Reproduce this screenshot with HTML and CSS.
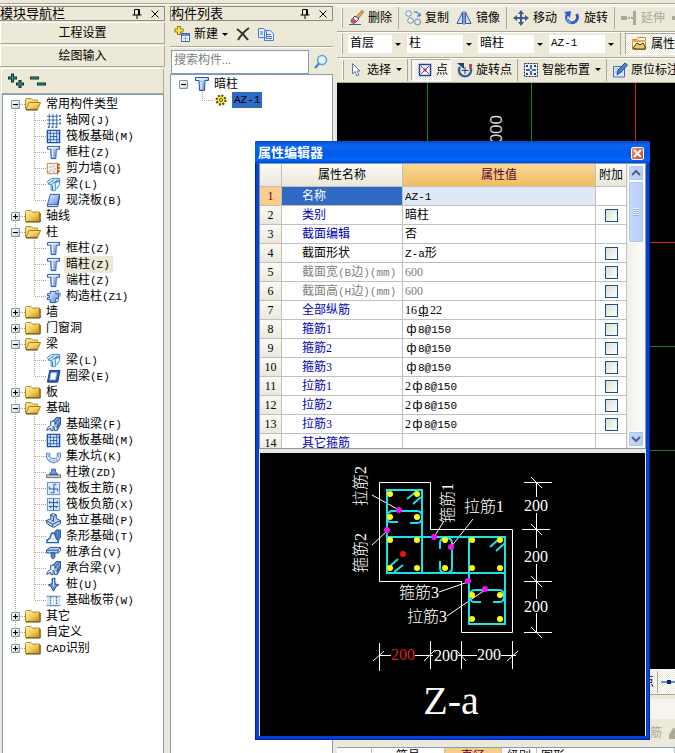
FILE: index.html
```html
<!DOCTYPE html>
<html lang="zh-CN">
<head>
<meta charset="utf-8">
<title>属性编辑器</title>
<link rel="stylesheet" href="styles.css">
</head>
<body>
<svg class="defs" aria-hidden="true">
  <defs>
    <linearGradient id="gold" x1="0" y1="0" x2="1" y2="1"><stop offset="0" stop-color="#fff0b0"/><stop offset=".5" stop-color="#f6cf60"/><stop offset="1" stop-color="#c08a10"/></linearGradient>
    <linearGradient id="blue" x1="0" y1="0" x2="1" y2="1"><stop offset="0" stop-color="#e8f2ff"/><stop offset="1" stop-color="#5c8ce0"/></linearGradient>
    <symbol id="folder" viewBox="0 0 16 16"><path d="M.5 13.500V3.500L1.500 2.500H6L7.500 4H14.500V13.500Z" fill="url(#gold)" stroke="#b58a28"/><path d="M1 14H15.200V5" fill="none" stroke="#5a4718"/></symbol>
    <symbol id="folder-open" viewBox="0 0 16 16"><path d="M.5 13V3.500L1.500 2.500H6L7.500 4H12.500V7" fill="#f7dc88" stroke="#b58a28"/><path d="M1 13.500L4 6.500H15.500L12.500 13.500Z" fill="url(#gold)" stroke="#b08018"/><path d="M1 14H12.500" stroke="#5a4718"/></symbol>
    <symbol id="axis" viewBox="0 0 16 16"><path d="M3.500 1V14M7.500 1V14M11.500 1V14M1 3.500H13M1 7.500H13M1 11.500H13" stroke="#3465b4" fill="none"/><path d="M14 2h2v2h-2zM14 6h2v2h-2zM14 10h2v2h-2zM2 14h2v2h-2zM6 14h2v2h-2zM10 14h2v2h-2z" fill="#3465b4"/></symbol>
    <symbol id="raft" viewBox="0 0 16 16"><path d="M1.500 1.500H14.500V14.500H1.500Z" fill="#dceaff" stroke="#1d4fa8" stroke-width="1.500"/><path d="M4.500 2V14M11.500 2V14M2 4.500H14M2 11.500H14M8 4V12M4 8H12" stroke="#2c62b8" fill="none"/></symbol>
    <symbol id="column" viewBox="0 0 16 16"><path d="M1.500 1.500H14.500V4.500H11L10.500 14.500H5.500L5 4.500H1.500Z" fill="url(#blue)" stroke="#2450b0"/><path d="M3 3H13M7 6V13" stroke="#fff"/></symbol>
    <symbol id="shearwall" viewBox="0 0 16 16"><path d="M1.500 2.500H12.500V13.500H1.500Z" fill="#f7eee8" stroke="#c8804c"/><path d="M12.500 2.500V14M12 4H15M12 7.500H15M12 11H15" stroke="#c05a20" stroke-width="1.500"/><path d="M4 6h1v1H4zM7 5h1v1H7zM9 8h1v1H9zM5 9h1v1H5zM8 11h1v1H8zM3 11h1v1H3z" fill="#555"/></symbol>
    <symbol id="beam" viewBox="0 0 16 16"><path d="M1.500 4.500L6 1.500H14.500V4L10 6.500V14.500H5.500V8L3 8Z" fill="#d8efff" stroke="#3a8cd0"/><path d="M3 7L9 2.500M6 8L13 2.500M7 9V14M10 6L14.500 3.500V8L11 13" stroke="#2a70c0" fill="none"/></symbol>
    <symbol id="slab" viewBox="0 0 16 16"><path d="M4.500 1.500H14.500L12.500 12.500H1.500Z" fill="url(#blue)" stroke="#2450b0"/><path d="M1.500 12.500V14.500H12.500L14.500 3" fill="none" stroke="#1d3f90"/></symbol>
    <symbol id="tie" viewBox="0 0 16 16"><path d="M4.500 2.500H10.500V5H13.500V10H10.500V14.500H4.500V11.500H1.500V9H3.500V7H1.500V5H4.500Z" fill="url(#blue)" stroke="#1d4fa8"/><path d="M10.500 2.500L13 1V4M13.500 5L15 4V8M10.500 14.500L13 13V10" fill="none" stroke="#4a6ea8"/></symbol>
    <symbol id="ring" viewBox="0 0 16 16"><path d="M4 1.500H15L12.500 14H1.500Z" fill="#2c58b0" stroke="#173c88"/><path d="M5.500 4H11.500L10 11.500H4Z" fill="#fff" stroke="#9cc0f0"/></symbol>
    <symbol id="fbeam" viewBox="0 0 16 16"><path d="M7 5L11 .5H15.500V8L12 14V8Z" fill="#4c80c8" stroke="#1d5090"/><path d="M1 14.500V12L5 9V4.500H9.500V9L12 11V14.500H9V11L7.500 10V14.500H5V12Z" fill="#e4f0ff" stroke="#1d5090"/><path d="M9 5L13 1M11 8L15 3" stroke="#9cc4f4"/></symbol>
    <symbol id="pit" viewBox="0 0 16 16"><path d="M.5 4.500H4V8L6 10H10L12 8V4.500H15.500V9L13 13L8 15L3 13L.5 9Z" fill="#d0e4fc" stroke="#4c7cc0"/><path d="M2 7h1v1H2zM4 11h1v1H4zM8 12h1v1H8zM11 11h1v1h-1zM13 7h1v1h-1z" fill="#1d4fa8"/></symbol>
    <symbol id="pier" viewBox="0 0 16 16"><path d="M.5 10.500H15.500V13.500H.5Z" fill="#ccc" stroke="#666"/><path d="M3.500 10L6 7V4.500H10V7L12.500 10Z" fill="#6e9ce4" stroke="#2450b0"/></symbol>
    <symbol id="mainbar" viewBox="0 0 16 16"><path d="M1.500 1.500H14.500V14.500H1.500Z" fill="#dceaff" stroke="#5a86cc"/><path d="M11 3.500H8.500V12.500H5M3.500 6V8.500H12.500V11" fill="none" stroke="#1d4fa8"/></symbol>
    <symbol id="negbar" viewBox="0 0 16 16"><path d="M1.500 1.500H14.500V14.500H1.500Z" fill="#dceaff" stroke="#5a86cc"/><path d="M8 2V14M3 6H13M3 10H13M4 4V7M12 4V7M5 10V12M11 10V12" fill="none" stroke="#1d4fa8"/></symbol>
    <symbol id="isolated" viewBox="0 0 16 16"><path d="M.5 8L5 6V1.500L8 .5L11 2V6L15.500 8V11L8 15.500L.5 11Z" fill="#b8d4f8" stroke="#1d4f90"/><path d="M.5 8L7 12L15.500 8M7 12V15M5 2L8 4V9L5 7M8 4L11 2" fill="none" stroke="#1d4f90"/></symbol>
    <symbol id="strip" viewBox="0 0 16 16"><path d="M7 6L11 1H15.500V9L12 14" fill="#4c80c8" stroke="#245090"/><path d="M1 14.500V12L4 10L6 4.500H9L11 10L13 12V14.500Z" fill="#e4f0ff" stroke="#1d5fb0" stroke-width="1.500"/></symbol>
    <symbol id="cap" viewBox="0 0 16 16"><path d="M.5 5.500L4 2.500H15.500L13 5.500V8.500H.5Z" fill="#b4d0f8" stroke="#1d4f90"/><path d="M1 5.500H13M13 8.500L15.500 6V3" fill="none" stroke="#1d4f90"/><path d="M5.500 8.500V13L7.500 15L9.500 13V8.500Z" fill="#5c8cd8" stroke="#1d4f90"/></symbol>
    <symbol id="pile" viewBox="0 0 16 16"><path d="M6.500 1.500H9.500V7L13.500 8.500L10.500 10.500L8 15L5.500 10.500L2.500 8.500L6.500 7Z" fill="#6c94dc" stroke="#1d4080"/><path d="M8 2V10" stroke="#d0e4ff"/></symbol>
    <symbol id="band" viewBox="0 0 16 16"><path d="M.5 3.500H15.500M.5 13.500H15.500" stroke="#3465b4"/><path d="M1 4H4V13H1zM12 4H15V13H12z" fill="#cfe0fa"/><path d="M5 4V13M11 4V13" stroke="#123c78" stroke-dasharray="2 1"/><path d="M8 4V13" stroke="#7aa4e0" stroke-dasharray="1 1"/></symbol>
    <symbol id="pin" viewBox="0 0 10 10"><path d="M2.500 6V.5H7.500V6M.5 6H9.500M5 6V10" stroke="#000" fill="none"/><path d="M6 1h1.500v5H6z"/></symbol>
    <symbol id="close" viewBox="0 0 10 10"><path d="M1.500 1.500L8.500 8.500M8.500 1.500L1.500 8.500" stroke="#000" fill="none"/></symbol>
  </defs>
</svg>

<div class="app">
  <div class="top-edge"></div>

  <aside class="pane nav">
    <header class="pane-head"><h2>模块导航栏</h2>
      <button aria-label="固定"><svg><use href="#pin"/></svg></button>
      <button aria-label="关闭"><svg><use href="#close"/></svg></button>
    </header>
    <button class="section">工程设置</button>
    <button class="section">绘图输入</button>
    <div class="nav-tools">
      <button aria-label="全部展开"><svg width="18" height="18" viewBox="0 0 18 18"><path d="M1 6H10M5.500 1.500V10.500M9 12H17M13 8V16" stroke="#0a302c" stroke-width="3" fill="none"/><path d="M2 6H9M5.500 2.500V9.500M10 12H16M13 9V15" stroke="#35a08c" fill="none"/></svg></button>
      <button aria-label="全部折叠"><svg width="18" height="18" viewBox="0 0 18 18"><path d="M1 6H10M8 12H17" stroke="#0a302c" stroke-width="3"/><path d="M2 6H9M9 12H16" stroke="#35a08c"/></svg></button>
    </div>
    <ul class="tree">
      <li><div class="node"><button class="twist minus" aria-label="折叠"></button><svg><use href="#folder-open"/></svg><span>常用构件类型</span></div>
        <ul>
          <li><svg><use href="#axis"/></svg><span>轴网<b>(J)</b></span></li>
          <li><svg><use href="#raft"/></svg><span>筏板基础<b>(M)</b></span></li>
          <li><svg><use href="#column"/></svg><span>框柱<b>(Z)</b></span></li>
          <li><svg><use href="#shearwall"/></svg><span>剪力墙<b>(Q)</b></span></li>
          <li><svg><use href="#beam"/></svg><span>梁<b>(L)</b></span></li>
          <li><svg><use href="#slab"/></svg><span>现浇板<b>(B)</b></span></li>
        </ul></li>
      <li><div class="node"><button class="twist" aria-label="展开"></button><svg><use href="#folder"/></svg><span>轴线</span></div></li>
      <li><div class="node"><button class="twist minus" aria-label="折叠"></button><svg><use href="#folder-open"/></svg><span>柱</span></div>
        <ul>
          <li><svg><use href="#column"/></svg><span>框柱<b>(Z)</b></span></li>
          <li><svg><use href="#column"/></svg><span class="current">暗柱<b>(Z)</b></span></li>
          <li><svg><use href="#column"/></svg><span>端柱<b>(Z)</b></span></li>
          <li><svg><use href="#tie"/></svg><span>构造柱<b>(Z1)</b></span></li>
        </ul></li>
      <li><div class="node"><button class="twist" aria-label="展开"></button><svg><use href="#folder"/></svg><span>墙</span></div></li>
      <li><div class="node"><button class="twist" aria-label="展开"></button><svg><use href="#folder"/></svg><span>门窗洞</span></div></li>
      <li><div class="node"><button class="twist minus" aria-label="折叠"></button><svg><use href="#folder-open"/></svg><span>梁</span></div>
        <ul>
          <li><svg><use href="#beam"/></svg><span>梁<b>(L)</b></span></li>
          <li><svg><use href="#ring"/></svg><span>圈梁<b>(E)</b></span></li>
        </ul></li>
      <li><div class="node"><button class="twist" aria-label="展开"></button><svg><use href="#folder"/></svg><span>板</span></div></li>
      <li><div class="node"><button class="twist minus" aria-label="折叠"></button><svg><use href="#folder-open"/></svg><span>基础</span></div>
        <ul>
          <li><svg><use href="#fbeam"/></svg><span>基础梁<b>(F)</b></span></li>
          <li><svg><use href="#raft"/></svg><span>筏板基础<b>(M)</b></span></li>
          <li><svg><use href="#pit"/></svg><span>集水坑<b>(K)</b></span></li>
          <li><svg><use href="#pier"/></svg><span>柱墩<b>(ZD)</b></span></li>
          <li><svg><use href="#mainbar"/></svg><span>筏板主筋<b>(R)</b></span></li>
          <li><svg><use href="#negbar"/></svg><span>筏板负筋<b>(X)</b></span></li>
          <li><svg><use href="#isolated"/></svg><span>独立基础<b>(P)</b></span></li>
          <li><svg><use href="#strip"/></svg><span>条形基础<b>(T)</b></span></li>
          <li><svg><use href="#cap"/></svg><span>桩承台<b>(V)</b></span></li>
          <li><svg><use href="#fbeam"/></svg><span>承台梁<b>(V)</b></span></li>
          <li><svg><use href="#pile"/></svg><span>桩<b>(U)</b></span></li>
          <li><svg><use href="#band"/></svg><span>基础板带<b>(W)</b></span></li>
        </ul></li>
      <li><div class="node"><button class="twist" aria-label="展开"></button><svg><use href="#folder"/></svg><span>其它</span></div></li>
      <li><div class="node"><button class="twist" aria-label="展开"></button><svg><use href="#folder"/></svg><span>自定义</span></div></li>
      <li><div class="node"><button class="twist" aria-label="展开"></button><svg><use href="#folder"/></svg><span><b>CAD</b>识别</span></div></li>
    </ul>
  </aside>

  <section class="pane parts">
    <header class="pane-head"><h2>构件列表</h2>
      <button aria-label="固定"><svg><use href="#pin"/></svg></button>
      <button aria-label="关闭"><svg><use href="#close"/></svg></button>
    </header>
    <div class="parts-tools">
      <button><svg width="16" height="16" viewBox="0 0 16 16"><path d="M5 0V9M.5 4.500H9.500" stroke="#9c7c10" stroke-width="4"/><path d="M5 1V8M1.500 4.500H8.500" stroke="#ffe650" stroke-width="2"/><path d="M7.500 7.500H15.500V15.500H7.500Z" fill="#fff" stroke="#3465b4"/><path d="M8 8H15V10H8z" fill="#5c8ce0"/><path d="M9 12.500H14M11.500 10V15" stroke="#8cb0e8"/></svg>新建<i class="arrow"></i></button>
      <button aria-label="删除构件"><svg width="14" height="14" viewBox="0 0 14 14"><path d="M1 2Q7 6 12 13M13 1Q7 5 2 13" stroke="#303030" stroke-width="2" fill="none"/></svg></button>
      <button aria-label="复制构件"><svg width="16" height="14" viewBox="0 0 16 14"><path d="M.5 1.500H6L8.500 4V10.500H.5ZM6.500 3.500H12L15.500 6.500V13.500H6.500Z" fill="#e4f0ff" stroke="#4a7cd0"/><path d="M2 5H5M2 7H5M8 7.500H13M8 9.500H14M8 11.500H14" stroke="#4a7cd0"/></svg></button>
    </div>
    <div class="search">
      <input type="text" placeholder="搜索构件..." aria-label="搜索构件">
      <button aria-label="搜索"><svg width="16" height="16" viewBox="0 0 16 16"><circle cx="9" cy="6" r="4.500" fill="#e0f4ff" stroke="#58a4d8" stroke-width="1.500"/><path d="M6 9.500L2 14" stroke="#4a88c8" stroke-width="2.500"/></svg></button>
    </div>
    <ul class="part-tree">
      <li class="root"><button class="twist minus" aria-label="折叠"></button><svg><use href="#column"/></svg><span>暗柱</span></li>
      <li class="leaf"><svg viewBox="0 0 12 12"><circle cx="6" cy="6" r="4.500" fill="#ffe820" stroke="#4a4410" stroke-width="2" stroke-dasharray="2 1.500"/><circle cx="6" cy="6" r="1.500" fill="#fff" stroke="#4a4410"/></svg><a href="#az1"><b>AZ-1</b></a></li>
    </ul>
  </section>

  <main class="work">
    <div class="bar">
      <i class="grip"></i>
      <button class="tool"><svg viewBox="0 0 16 16"><path d="M1 14.500H13" stroke="#4a5a90"/><path d="M8 7L14 .5L15.500 2L10 9Z" fill="#e8b060" stroke="#a06820"/><path d="M3 10L7 6L11 9L7 13H4Z" fill="#fff" stroke="#30408c"/><path d="M3 10L5 8L9 11L7 13H4Z" fill="#d05070"/></svg>删除</button>
      <i class="sep"></i>
      <button class="tool"><svg viewBox="0 0 16 16"><circle cx="3.500" cy="3.500" r="2.800" fill="#eef4fc" stroke="#7088a8"/><circle cx="5.500" cy="10.500" r="2.800" fill="#eef4fc" stroke="#7088a8"/><circle cx="12.500" cy="12" r="3" fill="#dce8f8" stroke="#7088a8"/><path d="M9 2H12L15 6M15 3V6H12" fill="none" stroke="#2060c0"/></svg>复制</button>
      <button class="tool"><svg viewBox="0 0 16 16"><path d="M6.500 2V13.500H1ZM9.500 2V13.500H15Z" fill="#d0e0f8" stroke="#3458b0"/><path d="M8 1V15" stroke="#3458b0"/></svg>镜像</button>
      <i class="sep"></i>
      <button class="tool"><svg viewBox="0 0 16 16"><path d="M8 2V14M2 8H14" stroke="#405c90" stroke-width="2"/><path d="M8 0L11 4H5ZM8 16L5 12H11ZM0 8L4 5V11ZM16 8L12 11V5Z" fill="#405c90"/></svg>移动</button>
      <button class="tool"><svg viewBox="0 0 16 16"><path d="M3.500 4A5.500 5.500 0 1 0 12.500 4" fill="none" stroke="#2c60c8" stroke-width="3"/><path d="M0 2L7 1L6 8Z" fill="#2c60c8"/><path d="M4 6A4.500 4.500 0 0 0 7 13" fill="none" stroke="#9cc4ff"/></svg>旋转</button>
      <i class="sep"></i>
      <button class="tool" disabled><svg viewBox="0 0 16 16"><path d="M0 6H6V10H0zM12 1H15V15H12z" fill="#aca899"/><path d="M7 8H12" stroke="#aca899" stroke-width="2" stroke-dasharray="2 1"/></svg>延伸</button>
      <button class="tool" disabled aria-label="修剪"><svg viewBox="0 0 16 16"><path d="M0 6H6V10H0zM12 1H15V15H12z" fill="#aca899"/></svg></button>
    </div>
    <div class="bar">
      <i class="grip"></i>
      <label class="combo narrow"><select aria-label="楼层"><option>首层</option></select><i class="arrow"></i></label>
      <label class="combo"><select aria-label="构件类型"><option>柱</option></select><i class="arrow"></i></label>
      <label class="combo"><select aria-label="构件子类"><option>暗柱</option></select><i class="arrow"></i></label>
      <label class="combo latin"><select aria-label="构件名称"><option>AZ-1</option></select><i class="arrow"></i></label>
      <i class="sep"></i>
      <button class="tool pressed"><svg viewBox="0 0 16 16"><path d="M1.500 3.500H6L7 1.500H14.500V13.500H1.500Z" fill="#fff" stroke="#d08828"/><path d="M1 4H15V6H1z" fill="#f0a840"/><path d="M2 12L6 7L9 9L12 7L14 10V13H5Z" fill="#f0c860" stroke="#403820"/></svg>属性</button>
    </div>
    <div class="bar tight">
      <i class="grip"></i>
      <button class="tool"><svg viewBox="0 0 16 16"><path d="M4.500 1.500V12L7 9.500L9 14L11 13L9 9H12Z" fill="#fff" stroke="#5a78a8"/></svg>选择<i class="arrow"></i></button>
      <i class="sep"></i>
      <button class="tool pressed"><svg viewBox="0 0 16 16"><path d="M2.500 2.500H13.500V13.500H2.500Z" fill="#fff" stroke="#2040a0" stroke-width="1.500"/><path d="M4 4L12 12M12 4L4 12" stroke="#3050b0"/><path d="M6.500 6.500h3v3h-3z" fill="#e03030"/></svg>点</button>
      <button class="tool"><svg viewBox="0 0 16 16"><path d="M3 5A6 6 0 1 0 13 5" fill="none" stroke="#3c5c94" stroke-width="2.500"/><path d="M0 1H7V7Z" fill="#24407c"/><path d="M8 5V12M4.500 8.500H11.500" stroke="#24407c"/><path d="M12 2h3v3h-3z" fill="#d04040"/></svg>旋转点</button>
      <i class="sep"></i>
      <button class="tool"><svg viewBox="0 0 16 16"><path d="M1.500 1.500H14.500V14.500H1.500Z" fill="#e8f0fc" stroke="#182850" stroke-dasharray="2 1"/><path d="M8 3V7M8 9V13M3 8H7M9 8H13" stroke="#203870" stroke-width="1.500"/><path d="M3 3h2v2H3zM11 3h2v2h-2zM3 11h2v2H3zM11 11h2v2h-2z" fill="#203870"/></svg>智能布置<i class="arrow"></i></button>
      <i class="sep"></i>
      <button class="tool"><svg viewBox="0 0 16 16"><path d="M1.500 4.500H12.500V15H1.500Z" fill="#dceaff" stroke="#3c70c0"/><path d="M3 7H11M3 10H11" stroke="#8cb0e8"/><path d="M5 13L6 8L13 1L15.500 3L9 10Z" fill="#4888d8" stroke="#1c4890"/></svg>原位标注</button>
    </div>
    <div class="canvas">
      <svg width="100%" height="100%" aria-label="绘图区" shape-rendering="crispEdges">
        <path d="M90.500 0V600M194.500 0V600" stroke="#108a20"/>
        <path d="M298.500 0V600M0 159.500H900" stroke="#d82020"/>
        <path d="M0 263.500H900M0 367.500H900" stroke="#1c7c24"/>
        <text class="axis-text" transform="translate(165 32) rotate(-90)">3000</text>
      </svg>
    </div>
    <div class="snapbar"><button class="tool">顶点</button><i class="sep"></i><svg width="14" height="14" viewBox="0 0 14 14"><path d="M0 7H14" stroke="#5c94dc" stroke-width="2"/><path d="M6 5h4v4H6z" fill="#14246c"/></svg></div>
    <div class="spacer"></div>
    <div class="rebarbar"><button class="tool" disabled>箍筋<svg viewBox="0 0 16 16"><path d="M1 10L5 3H9V8H16V14H1Z" fill="#aca899"/></svg></button></div>
    <div class="rebar-grid"><span></span><span>筋号</span><span class="hot">直径</span><span>级别</span><span>图形</span></div>
  </main>
</div>

<section class="dialog" role="dialog" aria-labelledby="dlg-title">
  <header><h1 id="dlg-title">属性编辑器</h1><button aria-label="关闭"><svg width="11" height="11" viewBox="0 0 11 11"><path d="M2 2L9 9M9 2L2 9" stroke="#fff" stroke-width="2"/></svg></button></header>
  <div class="sheet">
    <div class="rows">
      <table>
        <colgroup><col class="c-no"><col class="c-name"><col><col class="c-add"></colgroup>
        <thead><tr><th></th><th>属性名称</th><th class="hot">属性值</th><th>附加</th></tr></thead>
        <tbody>
          <tr class="active"><th>1</th><td>名称</td><td><b>AZ-1</b></td><td></td></tr>
          <tr><th>2</th><td>类别</td><td>暗柱</td><td><input type="checkbox" aria-label="附加 类别"></td></tr>
          <tr><th>3</th><td>截面编辑</td><td>否</td><td></td></tr>
          <tr class="plain"><th>4</th><td>截面形状</td><td><b>Z-a</b>形</td><td><input type="checkbox" aria-label="附加 截面形状"></td></tr>
          <tr class="locked"><th>5</th><td>截面宽<b>(B</b>边<b>)(mm)</b></td><td>600</td><td><input type="checkbox" aria-label="附加 截面宽"></td></tr>
          <tr class="locked"><th>6</th><td>截面高<b>(H</b>边<b>)(mm)</b></td><td>600</td><td><input type="checkbox" aria-label="附加 截面高"></td></tr>
          <tr><th>7</th><td>全部纵筋</td><td>16<i class="bar-mark second">ф</i>22</td><td><input type="checkbox" aria-label="附加 全部纵筋"></td></tr>
          <tr><th>8</th><td>箍筋1</td><td><i class="bar-mark">ф</i><b>8@150</b></td><td><input type="checkbox" aria-label="附加 箍筋1"></td></tr>
          <tr><th>9</th><td>箍筋2</td><td><i class="bar-mark">ф</i><b>8@150</b></td><td><input type="checkbox" aria-label="附加 箍筋2"></td></tr>
          <tr><th>10</th><td>箍筋3</td><td><i class="bar-mark">ф</i><b>8@150</b></td><td><input type="checkbox" aria-label="附加 箍筋3"></td></tr>
          <tr><th>11</th><td>拉筋1</td><td>2<i class="bar-mark">ф</i><b>8@150</b></td><td><input type="checkbox" aria-label="附加 拉筋1"></td></tr>
          <tr><th>12</th><td>拉筋2</td><td>2<i class="bar-mark">ф</i><b>8@150</b></td><td><input type="checkbox" aria-label="附加 拉筋2"></td></tr>
          <tr><th>13</th><td>拉筋3</td><td>2<i class="bar-mark">ф</i><b>8@150</b></td><td><input type="checkbox" aria-label="附加 拉筋3"></td></tr>
          <tr><th>14</th><td>其它箍筋</td><td></td><td></td></tr>
        </tbody>
      </table>
    </div>
    <div class="scroll">
      <button aria-label="向上"><svg width="10" height="8" viewBox="0 0 10 8"><path d="M1 6L5 2L9 6" fill="none" stroke="#4d6185" stroke-width="2"/></svg></button>
      <i class="thumb"></i>
      <button class="down" aria-label="向下"><svg width="10" height="8" viewBox="0 0 10 8"><path d="M1 2L5 6L9 2" fill="none" stroke="#4d6185" stroke-width="2"/></svg></button>
    </div>
  </div>
  <figure>
    <svg viewBox="260 453 385 283" role="img" aria-label="Z-a">
      <g fill="none" stroke="#fff">
        <path d="M379.500 482.500H430.500V529.500H512.500V632.500H461.500V581.500H379.500Z"/>
        <path d="M372 495L399 510M372 545L386 532M434 537L444 521M451 547L473 519M439 592L468 582M447 616L485 590"/>
        <path d="M536.500 482V497M536.500 513V548M536.500 564V599M536.500 613V632M524 482.500H552M522 529.500H550M524 581.500H552M524 632.500H552"/>
        <path d="M531 477L542 488M531 524L542 535M531 576L542 587M531 627L542 638"/>
        <path d="M379.500 643V671M430.500 641V669M461.500 641V669M512.500 641V669M379 655.500H391M415 655.500H433M458 655.500H477M501 655.500H516"/>
        <path d="M373 661L384 651M424 661L435 650M456 650L466 661M507 661L518 651"/>
      </g>
      <g fill="none" stroke="#18e4e8" stroke-width="2">
        <path d="M387 490H422V573H387ZM387 537H505V573H387ZM469 537H505V624H469Z"/>
        <path d="M398 522H391Q387 522 387 517T392 511H417Q422 511 422 517T417 523H410"/>
        <path d="M440 549V543Q440 538 446 538T452 543V568Q452 573 446 573T440 568V561"/>
        <path d="M481 602H474Q470 602 470 596T475 590H499Q504 590 504 596T500 602H493"/>
        <path d="M407 499L417 491M413 504L421 497M389 567L398 559M394 572L403 565M490 547L499 539M496 551L505 543"/>
      </g>
      <g fill="#ffff10">
        <circle cx="390" cy="494" r="3"/><circle cx="417" cy="494" r="3"/><circle cx="390" cy="517" r="3"/><circle cx="417" cy="517" r="3"/>
        <circle cx="390" cy="540" r="3"/><circle cx="417" cy="540" r="3"/><circle cx="445" cy="540" r="3"/><circle cx="472" cy="540" r="3"/><circle cx="500" cy="540" r="3"/>
        <circle cx="390" cy="568" r="3"/><circle cx="417" cy="568" r="3"/><circle cx="445" cy="568" r="3"/><circle cx="472" cy="568" r="3"/><circle cx="500" cy="568" r="3"/>
        <circle cx="472" cy="595" r="3"/><circle cx="500" cy="595" r="3"/><circle cx="472" cy="619" r="3"/><circle cx="500" cy="619" r="3"/>
      </g>
      <circle cx="403" cy="554" r="3" fill="#f01010"/>
      <g fill="#f010f0"><circle cx="399" cy="510" r="3"/><circle cx="387" cy="530" r="3"/><circle cx="434" cy="537" r="3"/><circle cx="451" cy="547" r="3"/><circle cx="468" cy="581" r="3"/><circle cx="485" cy="589" r="3"/></g>
      <g class="marks">
        <text transform="translate(366 486) rotate(-90)">拉筋2</text>
        <text transform="translate(366 553) rotate(-90)">箍筋2</text>
        <text transform="translate(453 503) rotate(-90)">箍筋1</text>
        <text x="484" y="512">拉筋1</text><text x="419" y="598">箍筋3</text><text x="427" y="622">拉筋3</text>
        <text x="536" y="511">200</text><text x="536" y="562">200</text><text x="536" y="612">200</text>
        <text class="red" x="403" y="660">200</text><text x="446" y="661">200</text><text x="489" y="660">200</text>
        <text class="title" x="451" y="714">Z-a</text>
      </g>
    </svg>
  </figure>
</section>
</body>
</html>
```

FILE: styles.css
```css
* { box-sizing: border-box; }

:root {
  --face: #ece9d8;
  --shade: #aca899;
  --edge: #7f9db9;
  --cjk: "Noto Sans CJK SC";
}

body {
  margin: 0;
  height: 100vh;
  overflow: hidden;
  position: relative;
  background: var(--face);
  color: #000;
  font: 12px/16px "Liberation Serif", var(--cjk), sans-serif;
}

button, input, select { font: inherit; color: inherit; }
button { border: 0; padding: 0; background: none; }
h1, h2, ul, figure { margin: 0; padding: 0; }
ul { list-style: none; }
b { font: 11px/16px "Liberation Mono", monospace; }
i { font-style: normal; }
svg { flex: none; }
.defs { position: absolute; width: 0; height: 0; }

.app {
  display: grid;
  grid-template: 6px minmax(0, 1fr) / 165px 163px minmax(0, 1fr);
  column-gap: 5px;
  height: 100%;
}
.top-edge {
  grid-column: 1 / -1;
  height: 5px;
  border-bottom: 1px solid #fff;
  box-shadow: inset 0 -1px var(--shade);
}

/* docked panes */
.pane { display: flex; flex-direction: column; min-height: 0; }
.pane-head {
  display: flex;
  align-items: center;
  flex: none;
  gap: 8px;
  height: 15px;
  padding-right: 4px;
  border: 1px solid #8e8b7e;
}
.nav .pane-head { border-left: 0; }
.pane-head h2 {
  flex: 1;
  font-size: 13px;
  font-weight: 400;
  line-height: 13px;
  white-space: nowrap;
}
.pane-head button { height: 10px; line-height: 0; }
.pane-head svg { width: 10px; height: 10px; }

.section {
  flex: none;
  height: 22px;
  margin-top: 1px;
  border: 1px solid #fff;
  border-right-color: var(--shade);
  border-bottom-color: var(--shade);
}
.nav-tools {
  display: flex;
  flex: none;
  align-items: center;
  gap: 4px;
  height: 26px;
  margin: 1px 1px 0;
  padding-left: 5px;
  border: 1px solid #fff;
  border-right-color: var(--shade);
  border-bottom-color: var(--shade);
}
.nav-tools button { height: 18px; }

/* trees */
.tree {
  flex: 1;
  margin: 0 1px 0 2px;
  padding-top: 1px;
  overflow: hidden;
  border: 1px solid var(--edge);
  border-bottom: 0;
  background: #fff;
}
.tree > li:not(:last-child) {
  background: repeating-linear-gradient(#aaa698 0 1px, transparent 1px 2px) 12px 8px / 1px 100% no-repeat;
}
.tree .node, .tree ul li { display: flex; align-items: center; height: 16px; white-space: nowrap; }
.node {
  gap: 5px;
  padding-left: 8px;
  background: repeating-linear-gradient(90deg, #aaa698 0 1px, transparent 1px 2px) 17px 8px / 6px 1px no-repeat;
}
.tree > li:not(:first-child) > .node {
  background:
    repeating-linear-gradient(90deg, #aaa698 0 1px, transparent 1px 2px) 17px 8px / 6px 1px no-repeat,
    repeating-linear-gradient(#aaa698 0 1px, transparent 1px 2px) 12px 0 / 1px 8px no-repeat;
}
.node svg { width: 16px; height: 16px; }
.tree ul {
  background: repeating-linear-gradient(#aaa698 0 1px, transparent 1px 2px) 31px 0 / 1px calc(100% - 8px) no-repeat;
}
.tree ul li {
  gap: 3px;
  padding-left: 43px;
  background: repeating-linear-gradient(90deg, #aaa698 0 1px, transparent 1px 2px) 32px 8px / 11px 1px no-repeat;
}
.tree ul svg { width: 15px; height: 15px; }
.tree ul span { padding: 0 3px 0 2px; }
.tree .current { background: var(--face); }

.twist {
  flex: none;
  width: 9px;
  height: 9px;
  border: 1px solid #7b94ad;
  border-radius: 1px;
  background:
    linear-gradient(#000, #000) center / 5px 1px no-repeat,
    linear-gradient(#000, #000) center / 1px 5px no-repeat,
    linear-gradient(135deg, #fff, #d4d0c0);
}
.twist.minus {
  background:
    linear-gradient(#000, #000) center / 5px 1px no-repeat,
    linear-gradient(135deg, #fff, #d4d0c0);
}

.arrow {
  display: inline-block;
  width: 0;
  border: 3px solid transparent;
  border-top-color: #000;
  border-bottom: 0;
}

/* component list */
.parts-tools {
  display: flex;
  flex: none;
  align-items: center;
  gap: 8px;
  height: 26px;
  padding: 1px 4px 0;
  border-bottom: 1px solid var(--shade);
}
.parts-tools button { display: flex; align-items: center; gap: 4px; }
.search { display: flex; flex: none; height: 26px; padding: 2px 0 0 1px; border-top: 1px solid #fff; }
.search input {
  flex: 1;
  min-width: 0;
  height: 24px;
  padding: 0 2px 4px;
  border: 1px solid var(--edge);
  background: #fff;
}
.search input::placeholder { color: #808080; opacity: 1; }
.search button { width: 24px; padding-top: 4px; }
.part-tree {
  flex: 1;
  margin-top: 1px;
  padding-top: 1px;
  border: 1px solid var(--edge);
  border-width: 1px 1px 0;
  background: #fff;
}
.part-tree li { display: flex; align-items: center; height: 16px; }
.root { gap: 4px; padding-left: 8px; }
.root svg { width: 16px; height: 16px; margin-left: 2px; }
.leaf {
  gap: 5px;
  padding-left: 44px;
  background:
    repeating-linear-gradient(90deg, #aaa698 0 1px, transparent 1px 2px) 31px 8px / 12px 1px no-repeat,
    repeating-linear-gradient(#aaa698 0 1px, transparent 1px 2px) 31px 0 / 1px 8px no-repeat;
}
.leaf svg { width: 12px; height: 12px; }
.leaf a { padding: 0 2px; background: #316ac5; color: #000; text-decoration: none; line-height: 15px; }

/* toolbars */
.work { display: flex; flex-direction: column; min-height: 0; margin-left: -1px; }
.bar {
  display: flex;
  flex: none;
  align-items: center;
  gap: 6px;
  height: 26px;
  padding: 0 0 2px 4px;
  overflow: hidden;
  white-space: nowrap;
  border-bottom: 1px solid var(--shade);
  border-top: 1px solid #fff;
}
.bar.tight { gap: 5px; height: 25px; padding-left: 5px; }
.grip { flex: none; width: 2px; height: 20px; margin-right: -1px; border-left: 1px solid #fff; border-right: 1px solid var(--shade); }
.sep { flex: none; width: 1px; height: 22px; background: var(--shade); }
.tool { display: flex; flex: none; align-items: center; gap: 4px; height: 22px; }
.tool + .tool { margin-left: 1px; }
.tool svg { width: 16px; height: 16px; }
.tool:disabled { color: var(--shade); }
.tool .arrow { margin-left: 2px; }
.tight .tool { gap: 3px; }
.pressed {
  margin-left: -2px;
  padding: 0 2px 0 5px;
  border: 1px solid var(--shade);
  border-right-color: #fff;
  border-bottom-color: #fff;
  background: repeating-conic-gradient(#fff 0 25%, var(--face) 0 50%) 0 0 / 2px 2px;
}
.combo { display: flex; flex: none; align-items: center; width: 67px; margin-right: -2px; }
.combo.narrow { width: 55px; }
.combo select {
  flex: 1;
  min-width: 0;
  height: 18px;
  padding: 0 2px 2px;
  border: 0;
  appearance: none;
  background: #fff;
}
.combo .arrow { margin: 0 2px 0 3px; }
.combo.latin select { font: 11px/16px "Liberation Mono", monospace; }

.canvas { flex: 1; min-height: 0; overflow: hidden; background: #000; }
.canvas svg { display: block; }
.axis-text { fill: #d8d8d8; font: 17px "Liberation Sans", sans-serif; text-anchor: end; }

.snapbar, .rebarbar { display: flex; flex: none; justify-content: flex-end; align-items: center; gap: 3px; overflow: hidden; }
.snapbar {
  height: 26px;
  border-bottom: 1px solid var(--shade);
  background: repeating-conic-gradient(#fff 0 25%, var(--face) 0 50%) 0 0 / 2px 2px;
}
.spacer { flex: none; height: 20px; margin-top: 4px; background: #f5f4ee; }
.rebarbar { height: 28px; }
.rebarbar .tool { margin-right: -9px; gap: 6px; }
.rebar-grid {
  display: grid;
  flex: none;
  grid-template-columns: 35px 73px 57px 35px 1fr;
  height: 6px;
  overflow: hidden;
  border-top: 1px solid var(--edge);
  background: #fff;
  text-align: center;
}
.rebar-grid span { border-right: 1px solid #c0c0c0; white-space: nowrap; }
.rebar-grid .hot { background: #f8cf88; color: #600030; }
.rebar-grid span:last-child { padding-left: 4px; text-align: left; }

/* floating property editor */
.dialog {
  position: absolute;
  inset: 141px 25px 13px 255px;
  display: grid;
  grid-template-rows: 22px 286px minmax(0, 1fr);
  padding: 0 4px 4px;
  border-radius: 2px 2px 0 0;
  background: #0842d0;
  box-shadow: inset 1px 0 #0020a0, inset -1px -1px #0020a0;
}
.dialog header {
  display: flex;
  align-items: center;
  justify-content: space-between;
  margin: 0 -4px;
  padding: 2px 6px 0 3px;
  border-radius: 2px 2px 0 0;
  background: linear-gradient(#0a48c8, #0c66f0 20%, #0058e8 60%, #0068fc 85%, #0048d0);
  color: #fff;
}
.dialog h1 { font-size: 13px; line-height: 16px; font-weight: 700; }
.dialog header button {
  display: flex;
  border: 1px solid #fff;
  border-radius: 2px;
  background: linear-gradient(135deg, #f09070, #d04020);
}
.sheet { display: flex; overflow: hidden; border: 1px solid var(--edge); background: #fff; }
.rows { flex: 1; min-width: 0; overflow: hidden; }
table { width: 100%; border-collapse: separate; border-spacing: 0; table-layout: fixed; }
.c-no { width: 22px; }
.c-name { width: 121px; }
.c-add { width: 31px; }
th, td {
  height: 19px;
  padding: 0 0 0 2px;
  border-right: 1px solid #c0c0c0;
  border-bottom: 1px solid #c0c0c0;
  overflow: hidden;
  font-weight: 400;
  line-height: 16px;
  text-align: left;
  white-space: nowrap;
}
th { padding: 0; background: linear-gradient(#fbfaf6, #ebe8da); text-align: center; }
thead th { height: 23px; }
th.hot { background: linear-gradient(#f8d898, #f0bc60); color: #600030; }
td:nth-child(2) { padding-left: 20px; color: #0000b8; }
td:last-child { padding: 0; text-align: center; line-height: 0; }
.plain td:nth-child(2) { color: #000; }
.locked td { color: #808080; }
.locked td:nth-child(2) { color: #808080; }
.active th { background: #fccc88; color: #600030; }
.active td:nth-child(2) { background: #316ac5; color: #fff; }
.active td:nth-child(3) { background: #e0e8f6; }
td input {
  width: 13px;
  height: 13px;
  margin: 0;
  appearance: none;
  border: 1px solid #1c5180;
  background: linear-gradient(135deg, #dcdcd7, #fff);
  vertical-align: middle;
}
.bar-mark { display: inline-block; width: 13px; line-height: 11px; text-align: center; font-family: "Liberation Sans", sans-serif; }
.bar-mark.second { text-decoration: underline; }

.scroll { display: flex; flex: none; flex-direction: column; width: 18px; padding: 1px; background: linear-gradient(90deg, #f0efe8, #fefefb); }
.scroll button, .thumb {
  display: flex;
  flex: none;
  align-items: center;
  justify-content: center;
  height: 16px;
  border: 1px solid #fff;
  border-radius: 2px;
  background: linear-gradient(90deg, #c8d8fc, #b8ccf8);
  box-shadow: inset 0 0 0 1px #b0c4f0;
}
.thumb { height: 62px; }
.thumb::after { content: ""; width: 6px; height: 8px; background: repeating-linear-gradient(#eef4fe 0 1px, #8cb0f8 1px 2px); }
.scroll .down { margin-top: auto; }

.dialog figure {
  min-height: 0;
  padding-top: 4px;
  border: 1px solid var(--face);
  border-width: 0 1px;
  background: linear-gradient(var(--face) 4px, #000 4px);
}
.dialog figure svg { display: block; width: 100%; height: 100%; }
.marks { fill: #fff; font: 16px "Liberation Serif", var(--cjk), serif; font-weight: 300; text-anchor: middle; }
.marks .red { fill: #d82020; }
.marks .title { font-size: 40px; }
```
